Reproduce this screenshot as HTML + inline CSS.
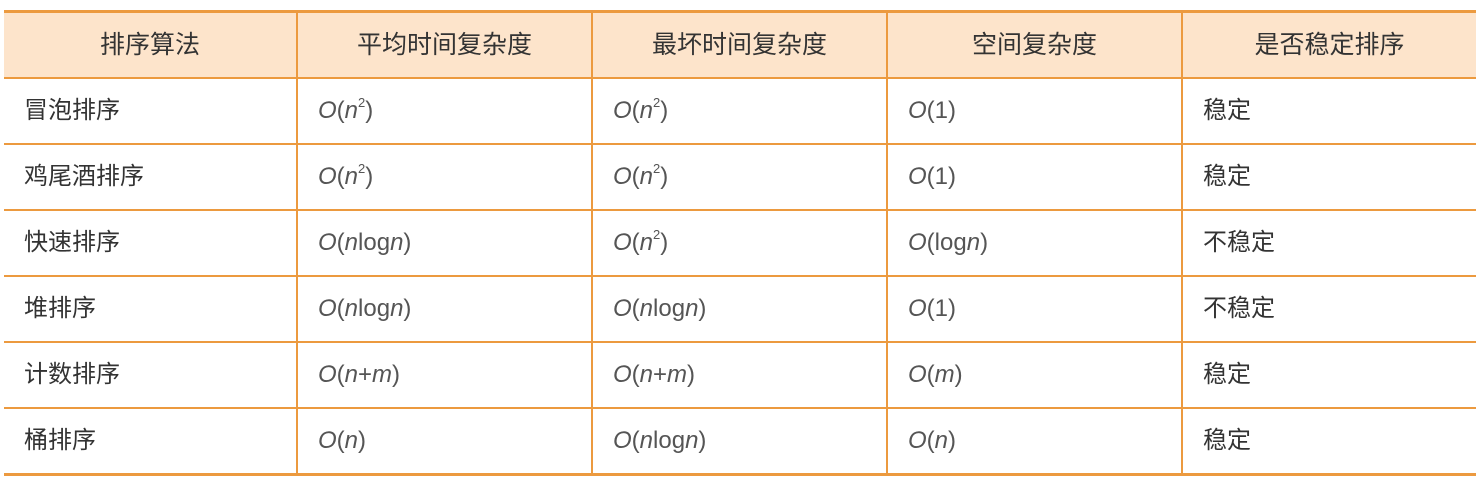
<!DOCTYPE html>
<html><head><meta charset="utf-8"><style>
body{margin:0;background:#fff;width:1479px;height:484px;overflow:hidden}
table{position:absolute;left:4px;top:10px;width:1472px;border-collapse:collapse;font-family:"Liberation Sans","Noto Sans CJK SC",sans-serif;font-size:24px;color:#333;line-height:30px}
td,th{border-left:2px solid #ec9a3f;border-bottom:2px solid #ec9a3f;height:64px;padding:0 0 0 20px;text-align:left;font-weight:normal;vertical-align:middle}
th{background:#fde4cb;text-align:center;padding:0;font-size:25px}
tr>*:first-child{border-left:none}
thead tr{border-top:3px solid #ec9a3f}
tbody tr:last-child td{border-bottom:3px solid #ec9a3f}
i{font-style:italic;color:#555}
td span.m{color:#555}
sup{font-size:13px;line-height:0;position:relative;top:-2px}
col.a{width:293px}col.b{width:295px}
</style></head><body>
<table>
<colgroup><col class="a"><col class="b"><col class="b"><col class="b"><col></colgroup>
<thead><tr><th>排序算法</th><th>平均时间复杂度</th><th>最坏时间复杂度</th><th>空间复杂度</th><th>是否稳定排序</th></tr></thead>
<tbody>
<tr><td>冒泡排序</td><td><span class="m"><i>O</i>(<i>n</i><sup>2</sup>)</span></td><td><span class="m"><i>O</i>(<i>n</i><sup>2</sup>)</span></td><td><span class="m"><i>O</i>(1)</span></td><td>稳定</td></tr>
<tr><td>鸡尾酒排序</td><td><span class="m"><i>O</i>(<i>n</i><sup>2</sup>)</span></td><td><span class="m"><i>O</i>(<i>n</i><sup>2</sup>)</span></td><td><span class="m"><i>O</i>(1)</span></td><td>稳定</td></tr>
<tr><td>快速排序</td><td><span class="m"><i>O</i>(<i>n</i>log<i>n</i>)</span></td><td><span class="m"><i>O</i>(<i>n</i><sup>2</sup>)</span></td><td><span class="m"><i>O</i>(log<i>n</i>)</span></td><td>不稳定</td></tr>
<tr><td>堆排序</td><td><span class="m"><i>O</i>(<i>n</i>log<i>n</i>)</span></td><td><span class="m"><i>O</i>(<i>n</i>log<i>n</i>)</span></td><td><span class="m"><i>O</i>(1)</span></td><td>不稳定</td></tr>
<tr><td>计数排序</td><td><span class="m"><i>O</i>(<i>n</i>+<i>m</i>)</span></td><td><span class="m"><i>O</i>(<i>n</i>+<i>m</i>)</span></td><td><span class="m"><i>O</i>(<i>m</i>)</span></td><td>稳定</td></tr>
<tr><td>桶排序</td><td><span class="m"><i>O</i>(<i>n</i>)</span></td><td><span class="m"><i>O</i>(<i>n</i>log<i>n</i>)</span></td><td><span class="m"><i>O</i>(<i>n</i>)</span></td><td>稳定</td></tr>
</tbody></table>
</body></html>
